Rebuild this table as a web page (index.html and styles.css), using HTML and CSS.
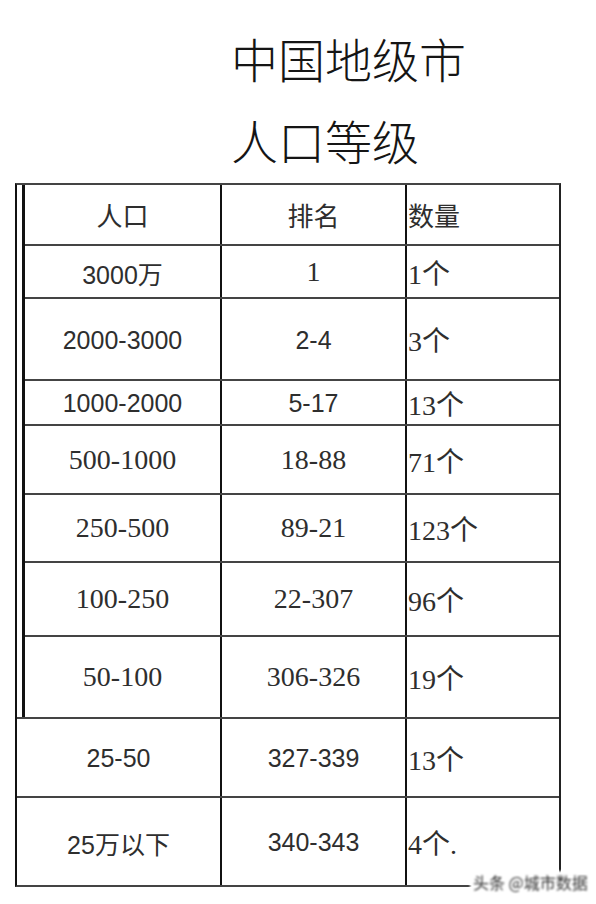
FILE: index.html
```html
<!DOCTYPE html>
<html lang="zh">
<head>
<meta charset="utf-8">
<title>中国地级市人口等级</title>
<link rel="stylesheet" href="styles.css">
</head>
<body>
<div class="page">
  <h1 class="title"><span>中国地级市</span><span>人口等级</span></h1>
  <div class="table">
    <div class="upper">
      <div class="row head">
        <div class="c">人口</div><div class="c">排名</div><div class="c q">数量</div>
      </div>
      <div class="row h53">
        <div class="c sans">3000万</div><div class="c serif">1</div><div class="c q serif">1个</div>
      </div>
      <div class="row h82">
        <div class="c sans">2000-3000</div><div class="c sans">2-4</div><div class="c q serif">3个</div>
      </div>
      <div class="row h45">
        <div class="c sans">1000-2000</div><div class="c sans">5-17</div><div class="c q serif">13个</div>
      </div>
      <div class="row h69">
        <div class="c serif">500-1000</div><div class="c serif">18-88</div><div class="c q serif">71个</div>
      </div>
      <div class="row h68">
        <div class="c serif">250-500</div><div class="c serif">89-21</div><div class="c q serif">123个</div>
      </div>
      <div class="row h74">
        <div class="c serif">100-250</div><div class="c serif">22-307</div><div class="c q serif">96个</div>
      </div>
      <div class="row h82">
        <div class="c serif">50-100</div><div class="c serif">306-326</div><div class="c q serif">19个</div>
      </div>
    </div>
    <div class="row lower h79">
      <div class="c sans">25-50</div><div class="c sans">327-339</div><div class="c q serif">13个</div>
    </div>
    <div class="row lower h89">
      <div class="c sans">25万以下</div><div class="c sans">340-343</div><div class="c q serif">4个.</div>
    </div>
  </div>
  <span class="mark">头条 @城市数据</span>
</div>
</body>
</html>
```

FILE: styles.css
```css
body {
  margin: 0;
  background: #fff;
}

.page {
  position: relative;
  width: 596px;
  height: 904px;
  overflow: hidden;
  background: #fff;
}

.title {
  margin: 17px 0 0 231px;
  font-family: "Noto Sans CJK SC", sans-serif;
  font-weight: 300;
  font-size: 47px;
  line-height: 82px;
  color: #151515;
}

.title span {
  display: block;
}

.table {
  margin-top: 2px;
  margin-left: 15px;
  width: 546px;
  box-sizing: border-box;
  border-left: 2px solid #111;
  border-top: 2px solid #444;
  border-right: 2px solid #222;
  border-bottom: 2px solid #444;
}

.upper {
  margin-left: 5px;
  border-left: 3px solid #111;
}

.row {
  display: grid;
  grid-template-columns: 1fr 185px 154px;
  box-sizing: border-box;
}

.upper .row + .row,
.row.lower {
  border-top: 2px solid #444;
}

.head { height: 59px; }
.h45 { height: 45px; }
.h53 { height: 53px; }
.h68 { height: 68px; }
.h69 { height: 69px; }
.h74 { height: 74px; }
.h79 { height: 79px; }
.h82 { height: 82px; }
.h89 { height: 89px; }

.c {
  display: flex;
  align-items: center;
  justify-content: center;
  box-sizing: border-box;
  border-left: 2px solid #111;
  color: #2e2e2e;
  font-family: "Noto Sans CJK SC", sans-serif;
  font-size: 26px;
  white-space: nowrap;
}

.c:first-child {
  border-left: none;
}

.c.q {
  justify-content: flex-start;
  padding-left: 1px;
}

.sans {
  font-family: "Liberation Sans", "Noto Sans CJK SC", sans-serif;
  font-size: 25px;
  padding-top: 2px;
}

.serif {
  font-family: "Liberation Serif", "Noto Sans CJK SC", serif;
  font-size: 28px;
}

.mark {
  position: absolute;
  left: 470px;
  top: 871px;
  padding: 0 3px;
  background: #fff;
  color: #333;
  font-family: "Noto Sans CJK SC", sans-serif;
  font-size: 16px;
  line-height: 22px;
  white-space: nowrap;
  filter: blur(1.2px);
}
```
